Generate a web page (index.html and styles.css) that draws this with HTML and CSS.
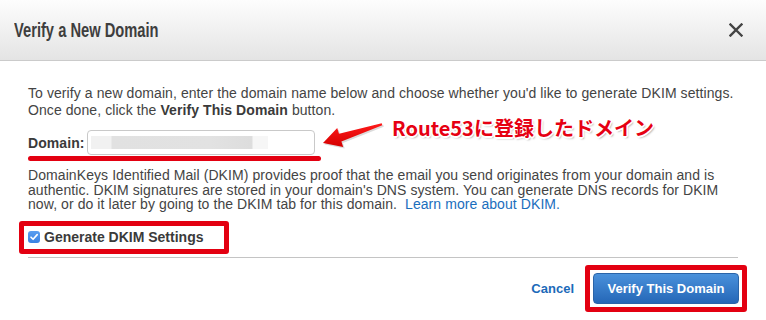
FILE: index.html
```html
<!DOCTYPE html>
<html>
<head>
<meta charset="utf-8">
<link rel="stylesheet" href="styles.css">
</head>
<body>
<div class="modal">
  <div class="header">
    <h1 class="title">Verify a New Domain</h1>
    <svg class="close" width="14" height="14" viewBox="0 0 14 14"><path d="M1.5 1.5 L12.5 12.5 M12.5 1.5 L1.5 12.5" stroke="#444" stroke-width="2.4" stroke-linecap="square"/></svg>
  </div>
  <div class="content">
    <p class="intro">To verify a new domain, enter the domain name below and choose whether you'd like to generate DKIM settings. Once done, click the <b>Verify This Domain</b> button.</p>
    <div class="domain-row">
      <label class="domain-label">Domain:</label>
      <div class="input"><span class="redact"></span></div>
    </div>
    <div class="underline"></div>
    <p class="dkim">DomainKeys Identified Mail (DKIM) provides proof that the email you send originates from your domain and is authentic. DKIM signatures are stored in your domain's DNS system. You can generate DNS records for DKIM now, or do it later by going to the DKIM tab for this domain. &nbsp;<a class="link">Learn more about DKIM.</a></p>
    <div class="check-frame">
      <span class="checkbox"><svg width="12" height="12" viewBox="0 0 12 12"><path d="M3 6.2 L5.1 8.3 L9.2 3.6" fill="none" stroke="#fff" stroke-width="1.6" stroke-linecap="round" stroke-linejoin="round"/></svg></span>
      <span class="check-label">Generate DKIM Settings</span>
    </div>
    <div class="separator"></div>
    <div class="footer">
      <a class="cancel">Cancel</a>
      <div class="btn-frame"><button class="primary">Verify This Domain</button></div>
    </div>
  </div>
  <svg class="arrow" width="72" height="40" viewBox="0 0 72 40">
    <defs>
      <linearGradient id="ag" x1="0" y1="0" x2="0" y2="1">
        <stop offset="0" stop-color="#ff1a1a"/>
        <stop offset="1" stop-color="#d40000"/>
      </linearGradient>
    </defs>
    <polygon points="6.5,26.5 20.7,11.6 22.5,17.3 65.2,6.8 65.8,8.8 24.9,24.9 26.7,30.6" fill="#999" opacity="0.35"/>
    <polygon points="5,25 19.2,10.1 21,15.8 63.7,5.3 64.3,7.3 23.4,23.4 25.2,29.1" fill="url(#ag)"/>
  </svg>
  <div class="note">Route53に登録したドメイン</div>
</div>
</body>
</html>
```
FILE: styles.css
```css
html, body {
  margin: 0;
  padding: 0;
  background: #fff;
}
body {
  font-family: "Liberation Sans", Arial, sans-serif;
  color: #444;
  width: 766px;
  height: 320px;
  overflow: hidden;
}
.modal {
  position: relative;
  width: 766px;
  height: 320px;
}
.header {
  height: 60px;
  border-bottom: 1px solid #cbcbcb;
  background: linear-gradient(#fdfdfd, #e4e4e4);
  display: flex;
  align-items: center;
  justify-content: space-between;
  padding: 0 23px 0 14px;
}
.title {
  margin: 0;
  font-family: "Liberation Sans", Arial, sans-serif;
  font-size: 21px;
  font-weight: bold;
  color: #3e3e3e;
  transform: scaleX(0.7);
  transform-origin: left center;
}
.close {
  display: block;
}
.content {
  padding: 24px 28px 0 28px;
  font-size: 14px;
  letter-spacing: 0.08px;
}
.intro {
  margin: 0;
  line-height: 17px;
}
.intro b {
  color: #3a3a3a;
}
.domain-row {
  display: flex;
  align-items: center;
  margin-top: 11px;
  height: 25px;
}
.domain-label {
  font-weight: bold;
  font-size: 14px;
  width: 59px;
  color: #3a3a3a;
}
.input {
  width: 223px;
  height: 23px;
  border: 1px solid #c9c9c9;
  border-radius: 4px;
  display: flex;
  align-items: center;
  padding-left: 3px;
  box-sizing: content-box;
}
.redact {
  display: block;
  width: 177px;
  height: 13px;
  background: linear-gradient(90deg, #f1f1f1 0, #f1f1f1 20px, #e1e1e1 21px, #e2e2e2 120px, #dddddd 160px, #dedede 161px, #f6f6f6 162px, #f6f6f6 177px);
}
.underline {
  width: 293px;
  height: 5px;
  border-radius: 3px;
  background: #e30011;
  margin-top: 1px;
}
.dkim {
  margin: 7px 0 0 0;
  line-height: 14.6px;
}
.link {
  color: #1a6ebd;
}
.check-frame {
  display: inline-flex;
  align-items: center;
  gap: 4px;
  margin: 9px 0 0 -9px;
  width: 196px;
  height: 23px;
  border: 5px solid #e30011;
  border-radius: 3px;
  padding: 0 0 0 4px;
  letter-spacing: 0;
}
.checkbox {
  width: 12px;
  height: 12px;
  border-radius: 3px;
  background: linear-gradient(#5a9ef0, #3a82e2);
  display: inline-flex;
}
.check-label {
  font-weight: bold;
  font-size: 14px;
  color: #3a3a3a;
}
.separator {
  height: 1px;
  background: #c4c4c4;
  margin-top: 3px;
}
.footer {
  display: flex;
  justify-content: flex-end;
  align-items: center;
  margin-top: 7px;
  margin-right: -9px;
  letter-spacing: 0;
}
.cancel {
  font-weight: bold;
  font-size: 13px;
  color: #1b6ab9;
  margin-right: 11px;
}
.btn-frame {
  border: 5px solid #e30011;
  border-radius: 3px;
  padding: 3px;
}
.primary {
  display: block;
  width: 146px;
  height: 31px;
  border: 1px solid #2a64a8;
  border-radius: 4px;
  background: linear-gradient(#4a91db, #2567b7);
  color: #fff;
  font-family: "Liberation Sans", Arial, sans-serif;
  font-weight: bold;
  font-size: 13px;
  padding: 0;
}
.arrow {
  position: absolute;
  left: 318px;
  top: 118px;
}
.note {
  position: absolute;
  left: 392px;
  top: 114px;
  font-family: "Noto Sans CJK JP", sans-serif;
  font-weight: bold;
  font-size: 20px;
  line-height: 28px;
  color: #e60012;
  letter-spacing: 0;
  text-shadow: 1.5px 0 0 #fff, -1.5px 0 0 #fff, 0 1.5px 0 #fff, 0 -1.5px 0 #fff, 1px 1px 0 #fff, -1px -1px 0 #fff, 1px -1px 0 #fff, -1px 1px 0 #fff, 1.5px 2px 2px rgba(0,0,0,0.35);
}
```
